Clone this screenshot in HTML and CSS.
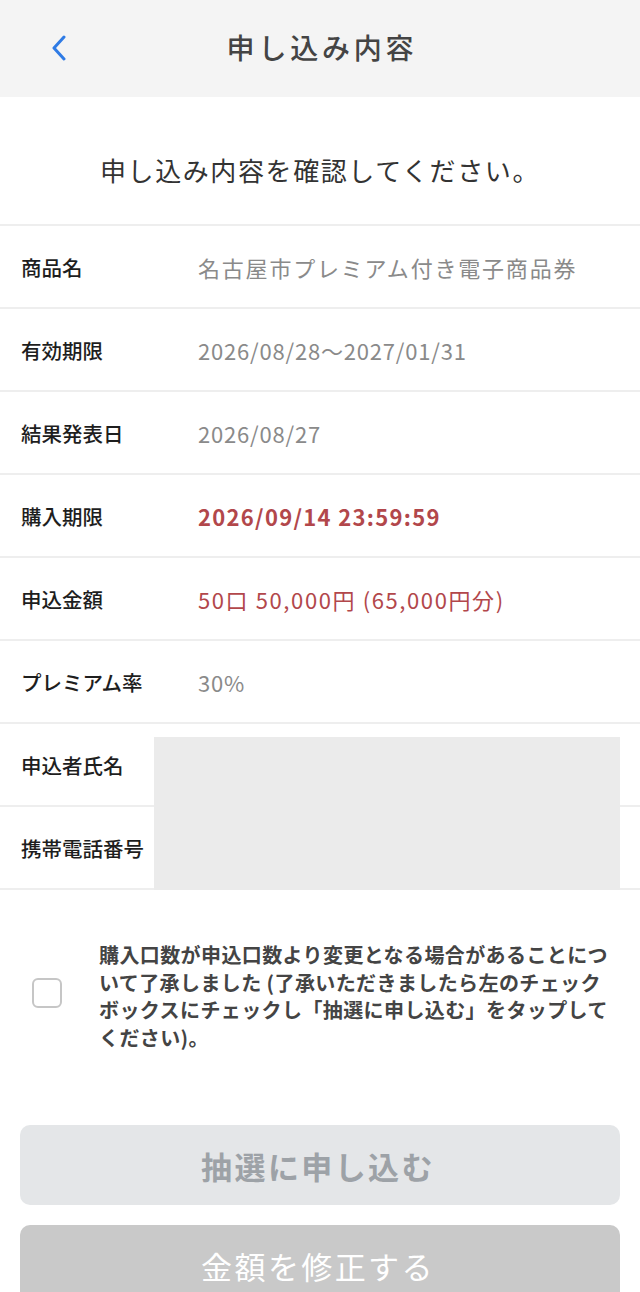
FILE: index.html
```html
<!DOCTYPE html>
<html lang="ja">
<head>
<meta charset="utf-8">
<title>申し込み内容</title>
<link rel="stylesheet" href="styles.css">
</head>
<body>
<header class="nav">
  <div class="nav-left">
    <svg class="back" width="16" height="26" viewBox="0 0 16 26" aria-hidden="true">
      <path d="M13 2 L3 13 L13 24" fill="none" stroke="#2f7be5" stroke-width="3" stroke-linecap="round" stroke-linejoin="round"/>
    </svg>
  </div>
  <h1 class="nav-title">申し込み内容</h1>
  <div class="nav-right"></div>
</header>

<section class="intro">申し込み内容を確認してください。</section>

<div class="list">
  <div class="row"><div class="label">商品名</div><div class="value value-jp">名古屋市プレミアム付き電子商品券</div></div>
  <div class="row"><div class="label">有効期限</div><div class="value">2026/08/28〜2027/01/31</div></div>
  <div class="row"><div class="label">結果発表日</div><div class="value">2026/08/27</div></div>
  <div class="row"><div class="label">購入期限</div><div class="value value-alert">2026/09/14 23:59:59</div></div>
  <div class="row"><div class="label">申込金額</div><div class="value value-red">50口 50,000円 (65,000円分)</div></div>
  <div class="row"><div class="label">プレミアム率</div><div class="value">30%</div></div>
  <div class="row"><div class="label">申込者氏名</div><div class="value"></div></div>
  <div class="row"><div class="label">携帯電話番号</div><div class="value"></div></div>
  <div class="redact"></div>
</div>

<section class="consent">
  <span class="checkbox"></span>
  <p class="consent-text">購入口数が申込口数より変更となる場合があることについて了承しました (了承いただきましたら左のチェックボックスにチェックし「抽選に申し込む」をタップしてください)。</p>
</section>

<div class="actions">
  <button class="btn btn-apply">抽選に申し込む</button>
  <button class="btn btn-edit">金額を修正する</button>
</div>
</body>
</html>
```

FILE: styles.css
```css
* { box-sizing: border-box; }
html, body {
  margin: 0;
  padding: 0;
  background: #ffffff;
  font-family: "Noto Sans CJK JP", "Noto Sans", sans-serif;
  color: #222;
}
.nav {
  height: 97px;
  background: #f4f4f4;
  display: grid;
  grid-template-columns: 1fr auto 1fr;
  align-items: center;
}
.nav-left {
  padding-left: 51px;
  display: flex;
  align-items: center;
  padding-bottom: 2px;
}
.nav-title {
  margin: 0;
  font-size: 28px;
  font-weight: 500;
  color: #444;
  letter-spacing: 3.8px;
  line-height: 40px;
  padding-bottom: 4px;
  padding-left: 4px;
}
.intro {
  padding: 55px 0 36px;
  line-height: 36px;
  font-size: 26px;
  letter-spacing: 1.6px;
  text-align: center;
  color: #333;
  border-bottom: 2px solid #eeeeee;
}
.list {
  position: relative;
}
.row {
  height: 83px;
  display: flex;
  align-items: center;
  border-bottom: 2px solid #eeeeee;
  padding-left: 21px;
}
.label {
  width: 177px;
  flex-shrink: 0;
  font-size: 20.5px;
  font-weight: 500;
  color: #1e1e1e;
  letter-spacing: 0;
}
.value {
  font-size: 22px;
  color: #8a8a8a;
  letter-spacing: 0.8px;
}
.value-jp {
  letter-spacing: 1.8px;
}
.value-alert {
  color: #b2474b;
  font-weight: 700;
  letter-spacing: 1.3px;
}
.value-red {
  color: #b2474b;
  letter-spacing: 1.6px;
}
.redact {
  position: absolute;
  left: 154px;
  top: 511px;
  width: 466px;
  height: 153px;
  background: #ebebeb;
}
.consent {
  display: flex;
  align-items: center;
  padding: 51px 29px 0 32px;
  gap: 37px;
}
.checkbox {
  flex-shrink: 0;
  width: 30px;
  height: 30px;
  border: 2px solid #c6c6c6;
  border-radius: 6px;
  background: #fff;
  margin-bottom: 6px;
}
.consent-text {
  margin: 0;
  font-size: 20px;
  line-height: 27.5px;
  font-weight: 700;
  color: #444;
  letter-spacing: 0.4px;
}
.actions {
  display: flex;
  flex-direction: column;
  gap: 20px;
  padding: 74px 20px 0;
}
.btn {
  height: 80px;
  border: none;
  border-radius: 10px;
  font-family: inherit;
  font-size: 31px;
  letter-spacing: 2.4px;
  padding-left: 2px;
}
.btn-apply {
  background: #e4e6e8;
  color: #9da2a7;
  font-weight: 700;
}
.btn-edit {
  background: #c9c9c9;
  color: #ffffff;
  font-weight: 400;
}
```
